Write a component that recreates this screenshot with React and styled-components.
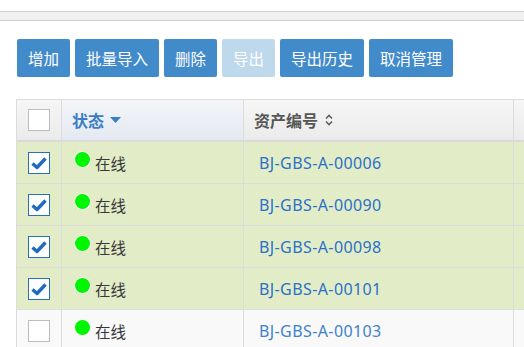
import React from 'react';
import styled, { createGlobalStyle } from 'styled-components';

const Global = createGlobalStyle`
  html, body { margin: 0; padding: 0; background: #fff; overflow: hidden; }
  body { font-family: "Noto Sans", "Noto Sans CJK SC", sans-serif; }
`;

const Page = styled.div`
  width: 524px;
  height: 347px;
  overflow: hidden;
`;

const TopBand = styled.div`
  margin-top: 11px;
  height: 8px;
  background: #f0f0f0;
  border-top: 1px solid #d2d2d2;
  border-bottom: 1px solid #cfcfcf;
`;

const Toolbar = styled.div`
  display: flex;
  gap: 5px;
  padding: 18px 0 0 17px;
`;

const Button = styled.button`
  height: 38px;
  padding: 0 11px;
  border: none;
  border-radius: 2px;
  background: ${p => (p.disabled ? '#bed8ec' : '#428bca')};
  color: #fff;
  font-family: "Noto Sans CJK SC", sans-serif;
  font-size: 15.5px;
  line-height: 38px;
  cursor: pointer;
`;

const Table = styled.div`
  margin: 22px 0 0 16px;
  width: 620px;
  border-top: 1px solid #dcdcdc;
  border-left: 1px solid #dcdcdc;
`;

const Row = styled.div`
  display: grid;
  grid-template-columns: 45px 182px 270px 1fr;
  height: ${p => (p.head ? '40px' : '41px')};
  background: ${p => (p.selected ? '#e2edc8' : '#f9f9f9')};
  border-bottom: ${p => (p.head ? '2px solid #dadada' : '1px solid #dcdcdc')};
`;

const Cell = styled.div`
  display: flex;
  align-items: center;
  border-right: 1px solid #dcdcdc;
  padding-left: ${p => (p.head ? '10px' : '13px')};
  justify-content: ${p => (p.center ? 'center' : 'flex-start')};
  ${p => p.center && 'padding-left: 0;'}
  background: ${p =>
    p.head
      ? p.sorted
        ? 'linear-gradient(#f3f5f9, #e4e9f1)'
        : 'linear-gradient(#f6f6f6, #ebebeb)'
      : 'transparent'};
`;

const HeadText = styled.span`
  font-family: "Noto Sans CJK SC", sans-serif;
  font-size: 16px;
  font-weight: 700;
  color: ${p => (p.active ? '#3b7ec6' : '#575757')};
  display: flex;
  align-items: center;
  gap: 6px;
`;

const Box = styled.span`
  width: 20px;
  height: 20px;
  background: #fff;
  border: 1px solid ${p => (p.checked ? '#2a6fbf' : '#bdbdbd')};
  display: flex;
  align-items: center;
  justify-content: center;
`;

const Status = styled.span`
  display: flex;
  align-items: center;
  gap: 5px;
  font-family: "Noto Sans CJK SC", sans-serif;
  font-size: 15.5px;
  color: #383838;
`;

const Dot = styled.span`
  width: 15px;
  height: 15px;
  border-radius: 50%;
  background: #00f500;
  box-shadow: 0 0 0 1px #f4fff0;
  margin-top: -6px;
`;

const Code = styled.a`
  font-family: "Noto Sans", sans-serif;
  font-size: 16px;
  letter-spacing: 0.4px;
  color: ${p => (p.selected ? '#2b70c8' : '#3f82cc')};
  text-decoration: none;
  padding-left: 2px;
`;

const Check = () => (
  <svg width="16" height="14" viewBox="0 0 16 14">
    <path d="M1.5 7.5 L6 11.5 L14.5 2.5" fill="none" stroke="#1f6ac3" strokeWidth="3.4" strokeLinejoin="round" />
  </svg>
);

const CaretDown = () => (
  <svg width="11" height="6" viewBox="0 0 11 6">
    <path d="M0 0 H11 L5.5 6 Z" fill="#3b7ec6" />
  </svg>
);

const SortBoth = () => (
  <svg width="10" height="12" viewBox="0 0 10 12">
    <path d="M2 4.5 L5 1.5 L8 4.5 M2 7.5 L5 10.5 L8 7.5" fill="none" stroke="#606060" strokeWidth="1.6" />
  </svg>
);

const rows = [
  { code: 'BJ-GBS-A-00006', selected: true },
  { code: 'BJ-GBS-A-00090', selected: true },
  { code: 'BJ-GBS-A-00098', selected: true },
  { code: 'BJ-GBS-A-00101', selected: true },
  { code: 'BJ-GBS-A-00103', selected: false },
];

const buttons = ['增加', '批量导入', '删除', '导出', '导出历史', '取消管理'];

export default function App() {
  return (
    <Page>
      <Global />
      <TopBand />
      <Toolbar>
        {buttons.map(b => (
          <Button key={b} disabled={b === '导出'}>{b}</Button>
        ))}
      </Toolbar>
      <Table>
        <Row head>
          <Cell head center><Box /></Cell>
          <Cell head sorted>
            <HeadText active>状态 <CaretDown /></HeadText>
          </Cell>
          <Cell head>
            <HeadText>资产编号 <SortBoth /></HeadText>
          </Cell>
          <Cell head />
        </Row>
        {rows.map(r => (
          <Row key={r.code} selected={r.selected}>
            <Cell center>
              <Box checked={r.selected}>{r.selected && <Check />}</Box>
            </Cell>
            <Cell>
              <Status><Dot />在线</Status>
            </Cell>
            <Cell>
              <Code selected={r.selected}>{r.code}</Code>
            </Cell>
            <Cell />
          </Row>
        ))}
      </Table>
    </Page>
  );
}
